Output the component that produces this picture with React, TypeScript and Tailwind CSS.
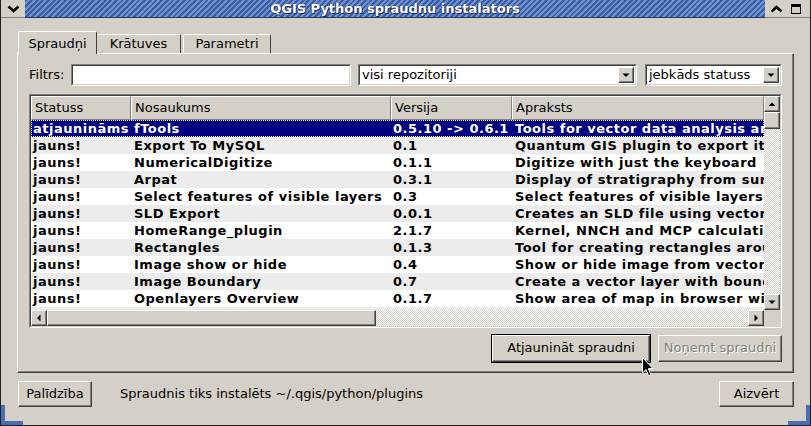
import React from "react";

const raised =
  "border border-t-white border-l-white border-r-[#404040] border-b-[#404040] shadow-[inset_-1px_-1px_0_#808080]";

const hatch =
  "bg-[image:repeating-conic-gradient(#d4d0c8_0%_25%,#ffffff_0%_50%)] bg-[length:2px_2px]";

const rows = [
  ["atjaunināms", "fTools", "0.5.10 -> 0.6.1", "Tools for vector data analysis and management"],
  ["jauns!", "Export To MySQL", "0.1", "Quantum GIS plugin to export its layers"],
  ["jauns!", "NumericalDigitize", "0.1.1", "Digitize with just the keyboard"],
  ["jauns!", "Arpat", "0.3.1", "Display of stratigraphy from survey data"],
  ["jauns!", "Select features of visible layers", "0.3", "Select features of visible layers"],
  ["jauns!", "SLD Export", "0.0.1", "Creates an SLD file using vector layer"],
  ["jauns!", "HomeRange_plugin", "2.1.7", "Kernel, NNCH and MCP calculations"],
  ["jauns!", "Rectangles", "0.1.3", "Tool for creating rectangles around features"],
  ["jauns!", "Image show or hide", "0.4", "Show or hide image from vector layer"],
  ["jauns!", "Image Boundary", "0.7", "Create a vector layer with boundary of images"],
  ["jauns!", "Openlayers Overview", "0.1.7", "Show area of map in browser with OpenLayers"],
  ["jauns!", "Plugin Loader", "0.2", "Load plugins from a folder"],
];

function Tri({ dir }: { dir: "up" | "down" | "left" | "right" }) {
  const pts = {
    up: "0.5,6 7.5,6 4,2.5",
    down: "0.5,2.5 7.5,2.5 4,6",
    left: "5.5,0.5 5.5,7.5 2,4",
    right: "2.5,0.5 2.5,7.5 6,4",
  }[dir];
  return (
    <svg width="8" height="8" viewBox="0 0 8 8">
      <polygon points={pts} fill="#000" />
    </svg>
  );
}

function ScrollBtn({ dir }: { dir: "up" | "down" | "left" | "right" }) {
  return (
    <div className={`flex h-[16px] w-[16px] shrink-0 items-center justify-center bg-[#d4d0c8] ${raised}`}>
      <Tri dir={dir} />
    </div>
  );
}

function Combo({ text, className }: { text: string; className: string }) {
  return (
    <div className={`flex h-[22px] items-center border border-t-[#808080] border-l-[#808080] border-r-white border-b-white ${className}`}>
      <div className="flex h-full flex-1 items-center border border-t-[#404040] border-l-[#404040] border-r-[#d4d0c8] border-b-[#d4d0c8] bg-white pl-[2px] pr-[1px]">
        <span className="flex-1 overflow-hidden whitespace-nowrap">{text}</span>
        <div className={`flex h-[16px] w-[16px] items-center justify-center bg-[#d4d0c8] ${raised}`}>
          <Tri dir="down" />
        </div>
      </div>
    </div>
  );
}

function Button({ children, className = "" }: { children: React.ReactNode; className?: string }) {
  return (
    <div className={`flex items-center justify-center bg-[#d4d0c8] ${raised} ${className}`}>
      {children}
    </div>
  );
}

export default function App() {
  const cols = ["w-[100px] pl-[2px]", "w-[260px] pl-[3px]", "w-[121px] pl-[2px]", "flex-1 pl-[3px]"];
  return (
    <div className="relative flex h-[426px] w-[811px] flex-col overflow-hidden border-x border-b border-[#202020] bg-[#d4d0c8] font-['DejaVu_Sans',sans-serif] text-[13px] text-black">
      {/* Title bar */}
      <div className="flex h-[18px] shrink-0">
        <div className="flex w-[24px] items-center justify-center border-b border-[#808080]">
          <svg width="13" height="8" viewBox="0 0 13 8">
            <path d="M1.5 1.5 L6.5 6 L11.5 1.5" stroke="#000" strokeWidth="2.6" fill="none" />
          </svg>
        </div>
        <div className="flex flex-1 items-center justify-center border-b border-[#22386a] bg-[image:repeating-linear-gradient(135deg,#3b5ca0_0px,#3b5ca0_2px,#6f91cf_2px,#6f91cf_4px)]">
          <span className="text-[13px] font-bold leading-none text-white [text-shadow:1px_1px_0_#1c2f5a,-1px_0_0_#2a4480]">
            QGIS Python spraudņu instalators
          </span>
        </div>
        <div className="flex w-[45px] items-center border-b border-[#808080]">
          <div className="flex w-[22px] justify-center">
            <svg width="13" height="8" viewBox="0 0 13 8">
              <path d="M1.5 6.5 L6.5 2 L11.5 6.5" stroke="#000" strokeWidth="2.6" fill="none" />
            </svg>
          </div>
          <div className="flex w-[18px] justify-center">
            <svg width="10" height="10" viewBox="0 0 10 10">
              <rect x="0.5" y="0.5" width="9" height="9" fill="none" stroke="#000" />
              <rect x="0" y="0" width="10" height="3" fill="#000" />
            </svg>
          </div>
        </div>
      </div>

      {/* Body */}
      <div className="flex flex-1 flex-col px-[16px] pb-[18px] pt-[13px]">
        {/* Tabs */}
        <div className="flex h-[22px] items-end pl-[1px]">
          <div className="z-10 -mb-px flex h-[23px] w-[79px] items-start justify-center rounded-t-[2px] border-l border-r border-t border-l-white border-r-[#404040] border-t-white bg-[#d4d0c8] pt-[2px]">
            Spraudņi
          </div>
          <div className="flex h-[19px] w-[84px] items-center justify-center rounded-t-[2px] border-r border-t border-r-[#404040] border-t-white">
            Krātuves
          </div>
          <div className="ml-[2px] flex h-[19px] w-[88px] items-center justify-center rounded-t-[2px] border-l border-r border-t border-l-white border-r-[#404040] border-t-white">
            Parametri
          </div>
        </div>

        {/* Tab pane */}
        <div className={`flex flex-1 flex-col px-[11px] pb-[10px] pt-[10px] ${raised}`}>
          {/* Filter row */}
          <div className="flex h-[22px] items-center">
            <span className="w-[42px]">Filtrs:</span>
            <div className="h-[22px] w-[280px] border border-t-[#808080] border-l-[#808080] border-r-white border-b-white">
              <div className="h-full border border-t-[#404040] border-l-[#404040] border-r-[#d4d0c8] border-b-[#d4d0c8] bg-white" />
            </div>
            <Combo text="visi repozitoriji" className="ml-[7px] w-[279px]" />
            <Combo text="jebkāds statuss" className="ml-[8px] flex-1" />
          </div>

          {/* Table */}
          <div className="mt-[8px] h-[234px] border border-t-[#808080] border-l-[#808080] border-r-white border-b-white">
            <div className="grid h-full grid-cols-[1fr_16px] grid-rows-[1fr_16px] border border-t-[#404040] border-l-[#404040] border-r-[#d4d0c8] border-b-[#d4d0c8]">
              <div className="flex flex-col overflow-hidden bg-white">
                <div className="flex h-[24px] shrink-0 bg-[#d4d0c8]">
                  {["Statuss", "Nosaukums", "Versija", "Apraksts"].map((h, i) => (
                    <div
                      key={h}
                      className={`flex items-center overflow-hidden whitespace-nowrap border-r border-b border-l border-t border-l-white border-t-white border-r-[#808080] border-b-[#808080] pl-[3px] ${cols[i].split(" ")[0]}`}
                    >
                      {h}
                    </div>
                  ))}
                </div>
                {rows.map((r, ri) => {
                  const sel = ri === 0;
                  const bg = sel
                    ? "bg-[#000080] text-white outline-1 outline-dotted -outline-offset-1 outline-[#ffffc8]"
                    : ri % 2 === 1
                      ? "bg-[#ececec]"
                      : "bg-white";
                  return (
                    <div key={ri} className={`flex h-[17px] shrink-0 items-center font-bold tracking-[0.5px] ${bg}`}>
                      {r.map((c, ci) => (
                        <div key={ci} className={`overflow-hidden whitespace-nowrap ${cols[ci]}`}>
                          {c}
                        </div>
                      ))}
                    </div>
                  );
                })}
              </div>

              {/* Vertical scrollbar */}
              <div className={`flex flex-col ${hatch}`}>
                <ScrollBtn dir="up" />
                <div className={`h-[17px] w-[16px] bg-[#d4d0c8] ${raised}`} />
                <div className="flex-1" />
                <ScrollBtn dir="down" />
              </div>

              {/* Horizontal scrollbar */}
              <div className={`flex ${hatch}`}>
                <ScrollBtn dir="left" />
                <div className={`h-[16px] w-[329px] bg-[#d4d0c8] ${raised}`} />
                <div className="flex-1" />
                <ScrollBtn dir="right" />
              </div>
              <div className="bg-[#d4d0c8]" />
            </div>
          </div>

          {/* Action buttons */}
          <div className="mt-[6px] flex h-[28px] items-center justify-end gap-[7px]">
            <div className="border border-black">
              <Button className="h-[27px] w-[158px]">Atjaunināt spraudni</Button>
            </div>
            <Button className="h-[27px] w-[124px] text-[#808080] [text-shadow:1px_1px_0_#ffffff]">
              Noņemt spraudni
            </Button>
          </div>
        </div>

        {/* Bottom row */}
        <div className="mt-[8px] flex h-[26px] items-center">
          <Button className="ml-[1px] h-[26px] w-[74px]">Palīdzība</Button>
          <span className="ml-[28px] flex-1">Spraudnis tiks instalēts ~/.qgis/python/plugins</span>
          <Button className="h-[26px] w-[75px]">Aizvērt</Button>
        </div>
      </div>

      {/* resize corners */}
      <div className="absolute bottom-0 left-0 h-[20px] w-[4px] bg-[#4a6db3]" />
      <div className="absolute bottom-0 left-0 h-[4px] w-[22px] bg-[#4a6db3]" />
      <div className="absolute bottom-0 right-0 h-[20px] w-[4px] bg-[#4a6db3]" />
      <div className="absolute bottom-0 right-0 h-[4px] w-[22px] bg-[#4a6db3]" />

      {/* mouse pointer */}
      <svg className="absolute left-[641px] top-[357px]" width="13" height="21" viewBox="0 0 13 21">
        <path d="M0.5 0.5 L0.5 16 L4 12.5 L6.8 19 L9 18 L6.3 11.6 L11 11.6 Z" fill="#000" stroke="#fff" strokeWidth="1" />
      </svg>
    </div>
  );
}
